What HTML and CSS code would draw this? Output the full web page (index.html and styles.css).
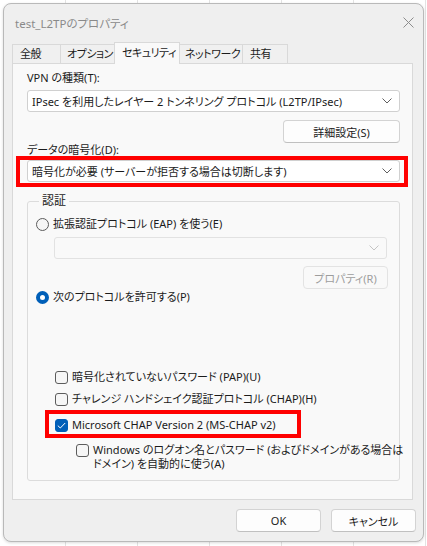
FILE: index.html
```html
<!DOCTYPE html>
<html lang="ja">
<head>
  <meta charset="UTF-8">
  <title>test_L2TPのプロパティ</title>
  <link rel="stylesheet" href="styles.css">
</head>
<body>

<!-- ダイアログ本体 -->
<div class="window">
  <div class="titlebar">
    <span class="title">test_L2TPのプロパティ</span>
    <svg class="close" width="11" height="11" viewBox="0 0 11 11">
      <path d="M0.5 0.5 L10.5 10.5 M10.5 0.5 L0.5 10.5" stroke="#8c8c8c" stroke-width="1" fill="none"/>
    </svg>
  </div>

  <!-- タブ -->
  <div class="tabs">
    <div class="tab tab-general">全般</div>
    <div class="tab tab-options">オプション</div>
    <div class="tab tab-security active">セキュリティ</div>
    <div class="tab tab-network">ネットワーク</div>
    <div class="tab tab-share">共有</div>
  </div>

  <div class="panel">
    <div class="label">VPN の種類(T):</div>
    <div class="select">
      <span>IPsec を利用したレイヤー 2 トンネリング プロトコル (L2TP/IPsec)</span>
      <svg class="chevron" width="10" height="6" viewBox="0 0 10 6"><path d="M0.5 0.5 L5 5 L9.5 0.5" stroke="#5f5f5f" fill="none"/></svg>
    </div>
    <div class="right">
      <button class="btn btn-detail">詳細設定(S)</button>
    </div>

    <div class="label label-tight">データの暗号化(D):</div>
    <div class="mark mark-select">
      <div class="select">
        <span>暗号化が必要 (サーバーが拒否する場合は切断します)</span>
        <svg class="chevron" width="10" height="6" viewBox="0 0 10 6"><path d="M0.5 0.5 L5 5 L9.5 0.5" stroke="#5f5f5f" fill="none"/></svg>
      </div>
    </div>

    <!-- 認証 -->
    <fieldset class="group">
      <legend>認証</legend>

      <div class="option">
        <span class="radio"></span>
        <span>拡張認証プロトコル (EAP) を使う(E)</span>
      </div>
      <div class="select disabled">
        <span></span>
        <svg class="chevron" width="10" height="6" viewBox="0 0 10 6"><path d="M0.5 0.5 L5 5 L9.5 0.5" stroke="#c4c4c4" fill="none"/></svg>
      </div>
      <div class="right">
        <button class="btn btn-prop" disabled>プロパティ(R)</button>
      </div>

      <div class="option">
        <span class="radio checked"></span>
        <span>次のプロトコルを許可する(P)</span>
      </div>

      <div class="option sub first">
        <span class="check"></span>
        <span>暗号化されていないパスワード (PAP)(U)</span>
      </div>
      <div class="option sub">
        <span class="check"></span>
        <span>チャレンジ ハンドシェイク認証プロトコル (CHAP)(H)</span>
      </div>
      <div class="mark mark-check">
        <div class="option">
          <span class="check checked">
            <svg width="9" height="7" viewBox="0 0 9 7"><path d="M0.8 3.6 L3.3 6 L8.2 1" stroke="#fff" stroke-width="1" fill="none"/></svg>
          </span>
          <span>Microsoft CHAP Version 2 (MS-CHAP v2)</span>
        </div>
      </div>
      <div class="option wrap">
        <span class="check"></span>
        <span class="lines">
          <span>Windows のログオン名とパスワード (およびドメインがある場合は</span>
          <span>ドメイン) を自動的に使う(A)</span>
        </span>
      </div>
    </fieldset>
  </div>

  <div class="footer">
    <button class="btn btn-footer">OK</button>
    <button class="btn btn-footer">キャンセル</button>
  </div>
</div>

</body>
</html>
```

FILE: styles.css
```css
body {
  margin: 0;
  width: 427px;
  height: 546px;
  overflow: hidden;
  background-color: #fff;
  background-image: repeating-linear-gradient(90deg, transparent 0 65px, #e3e3e3 65px 66px, transparent 66px 72px);
  font-family: "Noto Sans", "Noto Sans CJK JP", sans-serif;
  font-feature-settings: "palt";
  font-size: 11px;
  color: #1b1b1b;
  white-space: nowrap;
}

.window {
  margin: 3px 0 0 3px;
  width: 421px;
  height: 539px;
  box-sizing: border-box;
  border: 1px solid #b9b9b9;
  border-radius: 8px;
  background-color: #efefef;
  box-shadow: 0 1px 3px rgba(0, 0, 0, 0.15);
  display: flex;
  flex-direction: column;
}

.titlebar {
  height: 38px;
  display: flex;
  align-items: center;
  justify-content: space-between;
  padding: 0 9px 0 11px;
}

.title {
  color: #8a8a8a;
  font-size: 11.5px;
  margin-top: -1px;
}

.close {
  margin-top: -2px;
}

/* タブ */
.tabs {
  display: flex;
  align-items: flex-end;
  height: 21px;
  margin-left: 8px;
}

.tab {
  height: 19px;
  box-sizing: border-box;
  border: 1px solid #d9d9d9;
  border-bottom: none;
  border-right: none;
  background-color: #f0f0f0;
  padding-left: 6px;
  line-height: 18px;
  letter-spacing: -0.5px;
  overflow: hidden;
}

.tab-general { width: 48px; padding-left: 7px; }
.tab-options { width: 54px; }
.tab-security { width: 66px; }
.tab-network { width: 62px; padding-left: 5px; }
.tab-share { width: 46px; padding-left: 7px; border-right: 1px solid #d9d9d9; }

.tab.active {
  height: 22px;
  margin-bottom: -1px;
  background-color: #f9f9f9;
  border-right: 1px solid #d9d9d9;
  position: relative;
  z-index: 1;
  line-height: 20px;
  padding-left: 7px;
}

.tab.active + .tab {
  border-left: none;
}

.panel {
  margin: 0 10px 0 8px;
  height: 437px;
  box-sizing: border-box;
  border: 1px solid #d9d9d9;
  background-color: #f9f9f9;
  padding: 6px 12px 0 14px;
}

.label {
  line-height: 16px;
  margin-bottom: 4px;
}

.label-tight {
  line-height: 13px;
  margin-bottom: 0;
}

.select {
  height: 22px;
  box-sizing: border-box;
  border: 1px solid #d0d0d0;
  border-radius: 3px;
  background-color: #fff;
  display: flex;
  align-items: center;
  justify-content: space-between;
  padding: 0 7px 0 4px;
}

.select.disabled {
  border-color: #e2e2e2;
  background-color: #f9f9f9;
  margin: 5px 0 0 18px;
}

.right {
  display: flex;
  justify-content: flex-end;
}

.btn {
  font: inherit;
  font-feature-settings: "palt";
  color: #1b1b1b;
  height: 23px;
  box-sizing: border-box;
  border: 1px solid #d3d3d3;
  border-bottom-color: #c0c0c0;
  border-radius: 4px;
  background-color: #fdfdfd;
  padding: 0;
}

.btn-detail {
  width: 117px;
  margin-top: 8px;
}

.btn-prop {
  width: 85px;
  margin: 7px -1px 0 0;
  color: #9d9d9d;
  border-color: #e3e3e3;
  background-color: #f9f9f9;
}

/* 赤枠 */
.mark {
  border: 4px solid #f00;
  box-sizing: border-box;
}

.mark-select {
  margin: 0 -8px 0 -11px;
  padding: 0 4px 1px 7px;
}

.group {
  margin: 6px 0 0 0;
  padding: 7px 12px 9px 8px;
  border: 1px solid #dcdcdc;
  border-radius: 3px;
  min-width: 0;
}

.group legend {
  padding: 0 3px;
  margin-left: 3px;
  line-height: 16px;
  font-size: 12px;
}

.option {
  display: flex;
  align-items: center;
  line-height: 16px;
}

.option .radio,
.option .check {
  margin-right: 4px;
  flex: none;
}

.radio {
  width: 13px;
  height: 13px;
  box-sizing: border-box;
  border: 1px solid #5c5c5c;
  border-radius: 50%;
  background-color: #f6f6f6;
}

.radio.checked {
  border: 4px solid #005fb8;
  background-color: #fff;
}

.check {
  width: 13px;
  height: 13px;
  box-sizing: border-box;
  border: 1px solid #5c5c5c;
  border-radius: 3px;
  background-color: #f6f6f6;
  display: flex;
  align-items: center;
  justify-content: center;
}

.check.checked {
  border-color: #005fb8;
  background-color: #005fb8;
}

.sub {
  margin-left: 19px;
  margin-top: 6px;
}

.sub.first {
  margin-top: 64px;
}

.mark-check {
  width: 256px;
  margin: 3px 0 0 9px;
  padding: 3px 0 1px 6px;
}

.wrap {
  margin: 5px 0 0 40px;
  align-items: flex-start;
}

.wrap .check {
  margin-top: 1px;
}

.lines {
  display: flex;
  flex-direction: column;
}

.lines span {
  height: 14px;
  line-height: 14px;
}

.footer {
  display: flex;
  justify-content: flex-end;
  gap: 10px;
  padding: 9px 7px 0 0;
}

.btn-footer {
  width: 85px;
}
```
